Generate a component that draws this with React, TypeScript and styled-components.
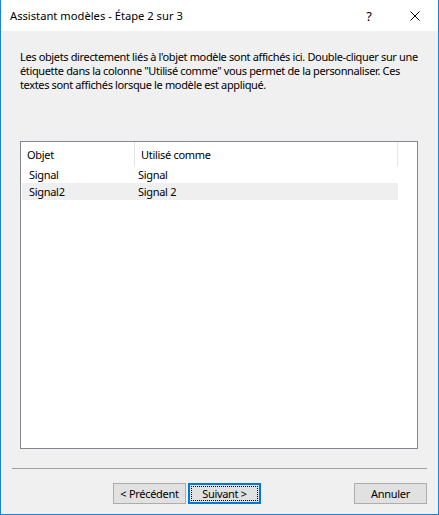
import React from "react";
import styled, { createGlobalStyle } from "styled-components";

const Global = createGlobalStyle`
  html, body { margin: 0; padding: 0; background: #ffffff; }
  body { font-family: "Noto Sans", "Open Sans", sans-serif; }
  * { box-sizing: border-box; }
`;

const Window = styled.div`
  width: 439px;
  height: 515px;
  display: flex;
  flex-direction: column;
  border: 1px solid #1883d7;
  border-top: none;
  background: #f0f0f0;
  font-family: "Noto Sans", sans-serif;
  font-size: 11px;
  letter-spacing: -0.3px;
  color: #000;
`;

const TitleBar = styled.div`
  height: 31px;
  background: #ffffff;
  display: flex;
  align-items: center;
  flex: none;
`;

const Title = styled.div`
  flex: 1;
  padding-left: 9px;
  font-size: 11.2px;
  letter-spacing: 0;
  white-space: nowrap;
`;

const CaptionButton = styled.div`
  width: 46px;
  height: 31px;
  display: flex;
  align-items: center;
  justify-content: center;
  font-size: 13px;
  letter-spacing: 0;
`;

const Client = styled.div`
  flex: 1;
  display: flex;
  flex-direction: column;
  padding: 19px 11px 11px 11px;
`;

const Description = styled.p`
  margin: 0 0 0 8px;
  line-height: 14px;
  letter-spacing: -0.36px;
  white-space: nowrap;
  height: 42px;
`;

const ListBox = styled.div`
  margin: 49px 9px 0 8px;
  height: 308px;
  border: 1px solid #828790;
  background: #ffffff;
  padding: 0 19px 0 1px;
  display: flex;
  flex-direction: column;
`;

const Header = styled.div`
  display: grid;
  grid-template-columns: 113px 1fr;
  height: 24px;
  flex: none;
`;

const HeaderCell = styled.div<{ $pad: number }>`
  display: flex;
  align-items: center;
  padding-left: ${(p) => p.$pad}px;
  border-right: 1px solid #e5e5e5;
`;

const Row = styled.div<{ $selected?: boolean }>`
  display: grid;
  grid-template-columns: 113px 1fr;
  height: 17px;
  align-items: center;
  background: ${(p) => (p.$selected ? "#efefef" : "transparent")};
`;

const Cell = styled.div<{ $pad: number }>`
  padding-left: ${(p) => p.$pad}px;
  white-space: nowrap;
`;

const Separator = styled.div`
  margin-top: 19px;
  height: 1px;
  background: #a0a0a0;
  flex: none;
`;

const ButtonRow = styled.div`
  margin-top: 14px;
  display: flex;
  align-items: center;
`;

const Button = styled.button<{ $default?: boolean }>`
  width: 73px;
  height: 21px;
  padding: 0;
  font-family: "Noto Sans", sans-serif;
  font-size: 11px;
  letter-spacing: -0.3px;
  color: #000;
  background: #e1e1e1;
  border: ${(p) => (p.$default ? "2px solid #0078d7" : "1px solid #adadad")};
  display: flex;
  align-items: center;
  justify-content: center;
  position: relative;
`;

const FocusRect = styled.span`
  position: absolute;
  inset: 1px;
  border: 1px dotted #000;
`;

const Spacer = styled.div<{ $w?: number }>`
  ${(p) => (p.$w !== undefined ? `width: ${p.$w}px;` : "flex: 1;")}
  flex-shrink: 0;
`;

export default function App() {
  return (
    <>
      <Global />
      <Window>
        <TitleBar>
          <Title>Assistant modèles - Étape 2 sur 3</Title>
          <CaptionButton>?</CaptionButton>
          <CaptionButton>
            <svg width="10" height="10" viewBox="0 0 10 10">
              <path d="M0.5 0.5 L9.5 9.5 M9.5 0.5 L0.5 9.5" stroke="#000" strokeWidth="1" fill="none" />
            </svg>
          </CaptionButton>
        </TitleBar>
        <Client>
          <Description>
            Les objets directement liés à l'objet modèle sont affichés ici. Double-cliquer sur une
            <br />
            étiquette dans la colonne "Utilisé comme" vous permet de la personnaliser. Ces
            <br />
            textes sont affichés lorsque le modèle est appliqué.
          </Description>
          <ListBox>
            <Header>
              <HeaderCell $pad={5}>Objet</HeaderCell>
              <HeaderCell $pad={6}>Utilisé comme</HeaderCell>
            </Header>
            <Row>
              <Cell $pad={7}>Signal</Cell>
              <Cell $pad={3}>Signal</Cell>
            </Row>
            <Row $selected>
              <Cell $pad={7}>Signal2</Cell>
              <Cell $pad={3}>Signal 2</Cell>
            </Row>
          </ListBox>
          <Separator />
          <ButtonRow>
            <Spacer $w={101} />
            <Button>&lt; Précédent</Button>
            <Spacer $w={2} />
            <Button $default>
              <FocusRect />
              Suivant &gt;
            </Button>
            <Spacer />
            <Button>Annuler</Button>
          </ButtonRow>
        </Client>
      </Window>
    </>
  );
}
